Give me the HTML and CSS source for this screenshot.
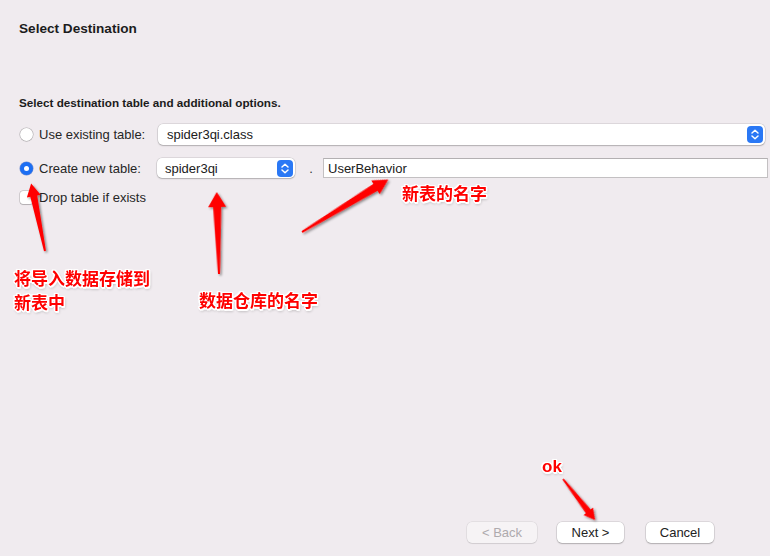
FILE: index.html
```html
<!DOCTYPE html>
<html lang="en">
<head>
<meta charset="utf-8">
<title>Select Destination</title>
<link rel="stylesheet" href="styles.css">
</head>
<body>
<div class="window">
  <h1 class="title">Select Destination</h1>
  <p class="subtitle">Select destination table and additional options.</p>

  <div class="form">
    <div class="row row-existing">
      <label class="choice choice-existing"><span class="radio"></span><span>Use existing table:</span></label>
      <div class="select select-wide">
        <span class="select-text">spider3qi.class</span>
        <svg class="stepper" viewBox="0 0 16 17" width="16" height="17"><rect width="16" height="17" rx="4" fill="#2a78f5"/><path d="M5 7 L8 4.3 L11 7 M5 10 L8 12.7 L11 10" fill="none" stroke="#fff" stroke-width="1.5" stroke-linecap="round" stroke-linejoin="round"/></svg>
      </div>
    </div>

    <div class="row row-new">
      <label class="choice choice-new"><span class="radio radio-on"></span><span>Create new table:</span></label>
      <div class="select select-db">
        <span class="select-text">spider3qi</span>
        <svg class="stepper" viewBox="0 0 16 17" width="16" height="17"><rect width="16" height="17" rx="4" fill="#2a78f5"/><path d="M5 7 L8 4.3 L11 7 M5 10 L8 12.7 L11 10" fill="none" stroke="#fff" stroke-width="1.5" stroke-linecap="round" stroke-linejoin="round"/></svg>
      </div>
      <span class="dot">.</span>
      <div class="textfield">UserBehavior</div>
    </div>

    <div class="row row-drop">
      <label class="choice"><span class="checkbox"></span><span>Drop table if exists</span></label>
    </div>
  </div>

  <div class="footer">
    <button class="btn btn-disabled">&lt; Back</button>
    <button class="btn">Next &gt;</button>
    <button class="btn btn-cancel">Cancel</button>
  </div>

  <svg class="arrows" width="770" height="556" viewBox="0 0 770 556">
    <defs>
      <filter id="sh" x="-50%" y="-50%" width="200%" height="200%">
        <feDropShadow dx="1.5" dy="1.5" stdDeviation="1.2" flood-color="#000" flood-opacity="0.45"/>
      </filter>
    </defs>
    <g fill="#ff0000" filter="url(#sh)">
      <polygon points="0,-1 56,-3.5 56,-7 69,0 56,7 56,3.5 0,1" transform="translate(45 251) rotate(-101.6)"/>
      <polygon points="0,-1 67,-4 67,-9 82,0 67,9 67,4 0,1" transform="translate(219 274) rotate(-91.6)"/>
      <polygon points="0,-1 86,-4 86,-8 101,0 86,8 86,4 0,1" transform="translate(302 232) rotate(-31.3)"/>
      <polygon points="0,-0.8 41,-3 41,-6 52,0 41,6 41,3 0,0.8" transform="translate(563 479) rotate(52)"/>
    </g>
  </svg>

  <div class="note note-import">将导入数据存储到<br>新表中</div>
  <div class="note note-db">数据仓库的名字</div>
  <div class="note note-table">新表的名字</div>
  <div class="note note-ok">ok</div>
</div>
</body>
</html>
```

FILE: styles.css
```css
* { box-sizing: border-box; }

html, body {
  margin: 0;
  padding: 0;
  background: #f0ebef;
}

.window {
  position: relative;
  width: 770px;
  height: 556px;
  display: flex;
  flex-direction: column;
  font-family: "Liberation Sans", Arial, sans-serif;
  font-size: 13px;
  color: #222;
  overflow: hidden;
}

.title {
  margin: 20px 0 0 19px;
  font-size: 13.6px;
  line-height: 17px;
  font-weight: bold;
  color: #1c1c1c;
}

.subtitle {
  margin: 59px 0 0 19px;
  font-size: 11.7px;
  line-height: 14px;
  font-weight: bold;
  color: #1c1c1c;
}

.form {
  display: flex;
  flex-direction: column;
}

.row {
  display: flex;
  align-items: center;
  padding-left: 20px;
}

.row-existing {
  margin-top: 13px;
  height: 22px;
  padding-right: 5px;
}

.row-new {
  margin-top: 12px;
  height: 22px;
  padding-right: 2px;
}

.row-drop {
  margin-top: 10px;
  height: 16px;
}

.choice {
  display: flex;
  align-items: center;
  gap: 6px;
  color: #262626;
}

.choice-existing { width: 138px; }
.choice-new { width: 137px; }

.radio {
  width: 13px;
  height: 13px;
  border-radius: 50%;
  background: #fff;
  box-shadow: 0 0 0 0.5px rgba(0, 0, 0, 0.25), 0 0.5px 1px rgba(0, 0, 0, 0.15);
  flex: none;
  position: relative;
}

.radio-on {
  background: #1c6ef3;
  box-shadow: 0 0 0 0.5px rgba(0, 60, 180, 0.5);
}

.radio-on::after {
  content: "";
  position: absolute;
  left: 4px;
  top: 4px;
  width: 5px;
  height: 5px;
  border-radius: 50%;
  background: #fff;
}

.checkbox {
  width: 13px;
  height: 13px;
  border-radius: 3px;
  background: #fff;
  box-shadow: 0 0 0 0.5px rgba(0, 0, 0, 0.25), 0 0.5px 1px rgba(0, 0, 0, 0.15);
  flex: none;
}

.select {
  height: 21px;
  background: #fff;
  border-radius: 5px;
  box-shadow: 0 0 0 0.5px rgba(0, 0, 0, 0.16), 0 1px 1.5px rgba(0, 0, 0, 0.2);
  display: flex;
  align-items: center;
  justify-content: space-between;
  padding: 0 2px 0 9px;
}

.select-wide { flex: 1; }

.select-db {
  width: 138px;
  height: 20px;
  padding-left: 8px;
}

.select-text { color: #202020; }

.stepper { display: block; flex: none; }

.dot {
  width: 28px;
  padding-left: 4px;
  text-align: center;
  color: #333;
}

.textfield {
  flex: 1;
  height: 20px;
  background: #fff;
  border: 1px solid #c3c0c2;
  border-top-color: #b3b0b2;
  display: flex;
  align-items: center;
  padding-left: 4px;
  color: #202020;
}

.footer {
  margin-top: auto;
  margin-bottom: 13px;
  display: flex;
  justify-content: flex-end;
  padding-right: 56px;
}

.btn {
  height: 21px;
  border: none;
  border-radius: 5px;
  background: #fff;
  box-shadow: 0 0 0 0.5px rgba(0, 0, 0, 0.16), 0 1px 1.5px rgba(0, 0, 0, 0.2);
  font-family: "Liberation Sans", Arial, sans-serif;
  font-size: 13px;
  color: #222;
  padding: 0;
  width: 67px;
  margin-left: 20px;
}

.btn-disabled {
  width: 70px;
  background: #f6f3f5;
  color: #aeaaad;
  box-shadow: 0 0 0 0.5px rgba(0, 0, 0, 0.1), 0 1px 1px rgba(0, 0, 0, 0.08);
}

.btn-cancel {
  width: 68px;
  margin-left: 22px;
}

.arrows {
  position: absolute;
  left: 0;
  top: 0;
  pointer-events: none;
}

.note {
  position: absolute;
  font-family: "Noto Sans CJK SC", "Liberation Sans", sans-serif;
  font-weight: bold;
  font-size: 17px;
  line-height: 24px;
  color: #ff0000;
  text-shadow:
    -1px -1px 0 #fff, 1px -1px 0 #fff, -1px 1px 0 #fff, 1px 1px 0 #fff,
    0 -1.5px 0 #fff, 0 1.5px 0 #fff, -1.5px 0 0 #fff, 1.5px 0 0 #fff,
    -1.5px -1.5px 1px #fff, 1.5px 1.5px 1px #fff,
    1px 2px 3px rgba(0, 0, 0, 0.45);
  white-space: nowrap;
}

.note-import { left: 14px; top: 266px; }
.note-db { left: 199px; top: 288px; }
.note-table { left: 402px; top: 181px; }
.note-ok {
  left: 542px;
  top: 455px;
  font-family: "Liberation Sans", Arial, sans-serif;
  font-size: 17px;
}
```
